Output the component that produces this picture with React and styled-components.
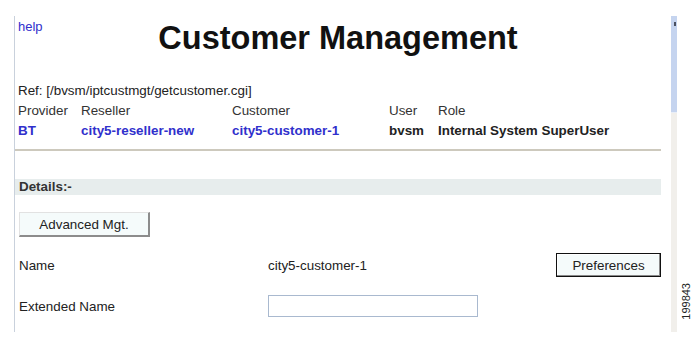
import React from 'react'
import styled, { createGlobalStyle } from 'styled-components'

const LINK = '#3030cc'

const columns = [
  { label: 'Provider', value: 'BT', link: true, width: '63px' },
  { label: 'Reseller', value: 'city5-reseller-new', link: true, width: '151px' },
  { label: 'Customer', value: 'city5-customer-1', link: true, width: '157px' },
  { label: 'User', value: 'bvsm', link: false, width: '49px' },
  { label: 'Role', value: 'Internal System SuperUser', link: false, width: 'auto' }
]

const GlobalStyle = createGlobalStyle`
  body {
    margin: 0;
    background: #fff;
    font-family: "Liberation Sans", Arial, sans-serif;
    color: #222;
  }
`

const Page = styled.div`
  display: flex;
  align-items: flex-start;
  width: 700px;
  height: 355px;
  padding: 16px 0 0 14px;
  box-sizing: border-box;
`

const Panel = styled.div`
  display: flex;
  flex-direction: column;
  width: 647px;
  height: 316px;
  border-left: 1px solid #c9d1dc;
  box-sizing: border-box;
  font-size: 13.4px;
`

const Header = styled.div`
  display: grid;
  grid-template-columns: 1fr auto 1fr;
  align-items: start;
`

const Help = styled.a`
  justify-self: start;
  margin: 3px 0 0 3px;
  font-size: 13px;
  line-height: 15px;
  color: ${LINK};
  text-decoration: none;
`

const Title = styled.h1`
  margin: 4px 0 0;
  font-size: 32.5px;
  line-height: 37px;
  font-weight: bold;
  color: #111;
`

const RefLine = styled.div`
  margin-top: 24px;
  padding-left: 3px;
  line-height: 20px;
`

const InfoGrid = styled.div`
  display: grid;
  grid-template-columns: ${props => props.$cols};
  padding-left: 3px;
  line-height: 20px;
  white-space: nowrap;
`

const HeadCell = styled.span`
  color: #333;
`

const ValueCell = styled.span`
  font-weight: bold;
  color: ${props => (props.$link ? LINK : '#222')};
`

const Separator = styled.div`
  margin-top: 8px;
  height: 2px;
  background: #cdc9bd;
`

const SectionBar = styled.div`
  margin-top: 28px;
  height: 16px;
  line-height: 16px;
  padding-left: 4px;
  background: #e7eded;
  font-weight: bold;
  color: #333;
`

const ButtonRow = styled.div`
  display: flex;
  margin-top: 17px;
  padding-left: 4px;
`

const Button = styled.button`
  width: ${props => props.$width};
  height: ${props => props.$height};
  padding: 0;
  background: #f5fbfb;
  font-family: inherit;
  font-size: 13.4px;
  color: #222;
  box-sizing: border-box;
  border-style: solid;
  ${props => props.$default
    ? `
      border-width: 1px;
      border-color: #111;
      box-shadow: inset -1px -1px 0 #8a8a8a, inset 1px 1px 0 #fff;
    `
    : `
      border-width: 1px 2px 2px 1px;
      border-color: #e2e2e2 #8c8c8c #8c8c8c #e2e2e2;
    `}
`

const FieldRow = styled.div`
  display: grid;
  grid-template-columns: 249px 1fr auto;
  align-items: center;
  height: ${props => props.$height};
  margin-top: ${props => props.$top};
  padding-left: 4px;
  color: #222;
`

const TextInput = styled.input`
  width: 210px;
  height: 22px;
  margin: 0;
  border: 1px solid #a9b9cf;
  box-sizing: border-box;
  background: #fff;
`

const Scrollbar = styled.div`
  display: flex;
  flex-direction: column;
  width: 6px;
  height: 316px;
  margin-left: 10px;
`

const ScrollArrow = styled.div`
  position: relative;
  height: 10px;
  background: #c5d4ef;
  &::after {
    content: '';
    position: absolute;
    left: 3px;
    top: 6px;
    width: 2px;
    height: 4px;
    background: #4a5060;
  }
`

const ScrollThumb = styled.div`
  height: 86px;
  background: #c5d4ef;
  border-bottom: 1px solid #e8eef8;
`

const ScrollTrack = styled.div`
  flex: 1;
  background: #f1efeb;
`

const FigureId = styled.div`
  margin: 267px 0 0 4px;
  writing-mode: vertical-rl;
  transform: rotate(180deg);
  font-size: 11px;
  line-height: 11px;
  color: #222;
`

function App () {
  return (
    <>
      <GlobalStyle />
      <Page>
        <Panel>
          <Header>
            <Help href="#">help</Help>
            <Title>Customer Management</Title>
            <span />
          </Header>

          <RefLine>Ref: [/bvsm/iptcustmgt/getcustomer.cgi]</RefLine>
          <InfoGrid $cols={columns.map(c => c.width).join(' ')}>
            {columns.map(c => <HeadCell key={c.label}>{c.label}</HeadCell>)}
            {columns.map(c => (
              <ValueCell key={c.label} $link={c.link}>{c.value}</ValueCell>
            ))}
          </InfoGrid>
          <Separator />

          <SectionBar>Details:-</SectionBar>

          <ButtonRow>
            <Button $width="131px" $height="25px">Advanced Mgt.</Button>
          </ButtonRow>

          <FieldRow $top="16px" $height="24px">
            <span>Name</span>
            <span>city5-customer-1</span>
            <Button $width="105px" $height="24px" $default>Preferences</Button>
          </FieldRow>

          <FieldRow $top="18px" $height="22px">
            <span>Extended Name</span>
            <TextInput type="text" />
          </FieldRow>
        </Panel>

        <Scrollbar>
          <ScrollArrow />
          <ScrollThumb />
          <ScrollTrack />
        </Scrollbar>

        <FigureId>199843</FigureId>
      </Page>
    </>
  )
}

export default App
